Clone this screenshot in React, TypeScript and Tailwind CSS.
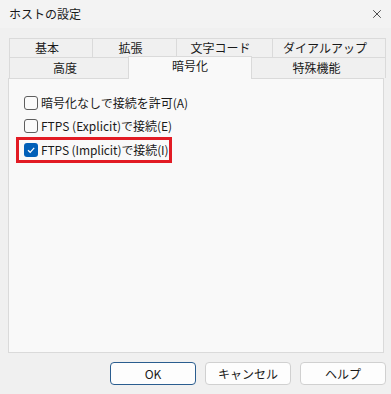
import { X } from "lucide-react";

const ROW1 = [
  { label: "基本", w: "w-[84px]" },
  { label: "拡張", w: "w-[84px]" },
  { label: "文字コード", w: "w-[96px]" },
  { label: "ダイアルアップ", w: "w-[113px]" },
];

function CheckBox({ checked }: { checked: boolean }) {
  if (checked) {
    return (
      <span className="flex h-[14px] w-[14px] shrink-0 items-center justify-center rounded-[3px] bg-[#005fb8]">
        <svg width="10" height="10" viewBox="0 0 10 10">
          <path d="M2 5.2 L4.2 7.3 L8.2 2.8" fill="none" stroke="#ffffff" strokeWidth="1.2" />
        </svg>
      </span>
    );
  }
  return <span className="block h-[14px] w-[14px] shrink-0 rounded-[3px] border border-[#5e5e5e] bg-[#fbfbfb]" />;
}

export default function App() {
  return (
    <div
      className="flex h-[394px] w-[391px] flex-col bg-[#f0f0f0] text-[12px] text-[#1a1a1a]"
      style={{ fontFamily: '"Noto Sans CJK JP", "Noto Sans", sans-serif' }}
    >
      {/* title bar */}
      <div className="flex h-[28px] items-center justify-between bg-[#f3f3f3] pl-[9px] pr-[7px]">
        <span className="text-[12px]">ホストの設定</span>
        <X className="h-[14px] w-[14px] text-[#1a1a1a]" strokeWidth={1.3} />
      </div>

      {/* tabs */}
      <div className="ml-[9px] mt-[10px] flex w-[377px] flex-col">
        <div className="flex h-[19px]">
          {ROW1.map((t, i) => (
            <div
              key={t.label}
              className={`${t.w} flex items-center justify-center border-t border-[#dadada] ${
                i === 0 ? "border-l" : ""
              } border-r bg-[#f0f0f0] pr-[8px] leading-none`}
            >
              {t.label}
            </div>
          ))}
        </div>
        <div className="flex h-[21px]">
          <div className="flex w-[119px] items-center justify-center border-l border-t border-[#dadada] pr-[8px] leading-none">
            高度
          </div>
          <div className="relative z-10 -mt-px flex h-[23px] w-[124px] items-start justify-center border-x border-t border-[#dadada] bg-[#f9f9f9] pt-[3px] leading-none">
            暗号化
          </div>
          <div className="flex w-[134px] items-center justify-center border-r border-t border-[#dadada] pr-[4px] leading-none">
            特殊機能
          </div>
        </div>
      </div>

      {/* panel */}
      <div className="ml-[8px] flex h-[275px] w-[376px] flex-col items-start border border-[#dadada] bg-[#f9f9f9] pl-[7px] pt-[12px]">
        <label className="flex h-[24px] items-center gap-[3px] whitespace-nowrap pl-[8px]">
          <CheckBox checked={false} />
          <span>暗号化なしで接続を許可(A)</span>
        </label>
        <label className="flex h-[22px] items-center gap-[3px] whitespace-nowrap pl-[8px]">
          <CheckBox checked={false} />
          <span>FTPS (Explicit)で接続(E)</span>
        </label>
        <label className="flex h-[26px] items-center gap-[3px] whitespace-nowrap border-[3px] border-[#e21b24] pl-[5px] pr-[1px]">
          <CheckBox checked={true} />
          <span className="tracking-[-0.1px]">FTPS (Implicit)で接続(I)</span>
        </label>
      </div>

      {/* buttons */}
      <div className="ml-[110px] mt-[9px] flex gap-[9px]">
        <button className="h-[23px] w-[86px] rounded-[4px] border border-[#2a5d8f] bg-[#fdfdfd] text-[12px]">
          OK
        </button>
        <button className="h-[23px] w-[86px] rounded-[4px] border border-[#d0d0d0] bg-[#fdfdfd] text-[12px]">
          キャンセル
        </button>
        <button className="h-[23px] w-[86px] rounded-[4px] border border-[#d0d0d0] bg-[#fdfdfd] text-[12px]">
          ヘルプ
        </button>
      </div>
    </div>
  );
}
